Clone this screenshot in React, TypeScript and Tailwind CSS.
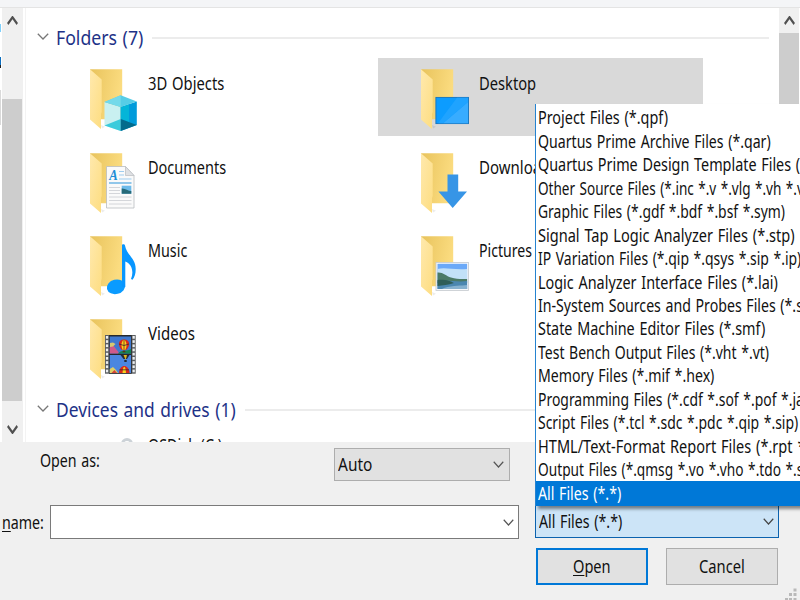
import { useLayoutEffect, useRef, useState } from 'react';
import type { ReactNode } from 'react';

/** Condenses a line of text horizontally so that it fills the given width. */
function Fit({ w, children, className = '' }: { w: number; children: ReactNode; className?: string }) {
  const ref = useRef<HTMLSpanElement>(null);
  const [scale, setScale] = useState(0.87);
  useLayoutEffect(() => {
    if (ref.current) setScale(w / ref.current.offsetWidth);
  }, [w]);
  return (
    <span className={`block shrink-0 whitespace-pre ${className}`} style={{ width: w }}>
      <span ref={ref} className="inline-block origin-left [word-spacing:1.2px]" style={{ transform: `scaleX(${scale})` }}>
        {children}
      </span>
    </span>
  );
}

function Chevron({ className = '', up = false, w = 12, h = 7, stroke = 1.3 }: { className?: string; up?: boolean; w?: number; h?: number; stroke?: number }) {
  return (
    <svg className={`block shrink-0 ${className}`} width={w} height={h} viewBox="0 0 12 7" preserveAspectRatio="none" fill="none" stroke="currentColor" strokeWidth={stroke}>
      <path d={up ? 'M0.8 6.2 6 1 11.2 6.2' : 'M0.8 0.8 6 6 11.2 0.8'} />
    </svg>
  );
}

function Cube() {
  return (
    <g>
      <path d="M16.5 34 32.7 39 32.7 63 16.5 57.5z" fill="#c9f0f1" />
      <path d="M32.7 39 48.8 33.5V57L32.7 63z" fill="#009bdb" />
      <path d="M32.7 39 41 36.2V54L32.7 51z" fill="#04b5d8" />
      <path d="M16.5 34 32.7 27.3 48.8 33.5 32.7 39z" fill="#56cde6" />
      <path d="M16.5 34 32.7 27.3V39z" fill="#74d9ea" />
      <path d="M16.5 57.5 32.7 51V63z" fill="#3bcbdc" />
      <path d="M32.7 51 48.8 57 32.7 63z" fill="#036b8c" />
    </g>
  );
}

function Doc() {
  return (
    <g>
      <path d="M18.5 14.5H37.5L46 23.5V56H18.5z" fill="#fafafa" stroke="#b9bcc0" strokeWidth="0.8" />
      <path d="M37.5 14.5V23.5H46z" fill="#dfe1e4" stroke="#b9bcc0" strokeWidth="0.7" />
      <text x="21.3" y="28.3" fontSize="14.5" fontWeight="700" fontStyle="italic" fill="#1f8fd6" fontFamily="Liberation Serif, serif" textLength="8.5" lengthAdjust="spacingAndGlyphs">A</text>
      <path d="M31 19.5H36M31 23H36M31 27H43.5" stroke="#9fcdef" strokeWidth="1" />
      <path d="M21 31H43.5" stroke="#4ba6df" strokeWidth="1.2" />
      <path d="M21 35.5H32M21 38.5H32M21 41.5H32M21 45H43.5M21 48.5H43.5M21 52H43.5" stroke="#cfd1d6" strokeWidth="0.9" />
      <rect x="33.7" y="33.7" width="9.6" height="8" fill="#6dbbea" />
      <path d="M33.7 36.5C37 36 40 39 43.3 39V41.7H33.7z" fill="#276a78" />
    </g>
  );
}

function Note() {
  return (
    <g>
      <ellipse cx="28" cy="51.8" rx="9.3" ry="7.2" transform="rotate(-14 28 51.8)" fill="#0a9bff" />
      <path d="M34 10C34 9 37 9 37 10.5C38.5 20 47.7 23 47.7 34C47.7 39 46.5 42 44.5 44.8L43 44C46 37 44 29 37.3 26.5V52H34z" fill="#0896ff" />
    </g>
  );
}

function Balloon({ x, y }: { x: number; y: number }) {
  return (
    <g transform={`translate(${x} ${y})`}>
      <path d="M0 -5.5C7 -5.5 6 2 2 5H-2C-6 2 -7 -5.5 0 -5.5z" fill="#d92a1c" />
      <path d="M0 -5.5C-3.4 -3 -3 2 -1.2 5H1.2C3 2 3.4 -3 0 -5.5z" fill="#f7d21e" />
      <path d="M0 -5.5V5" stroke="#7c211c" strokeWidth="0.8" />
      <path d="M-5 -1Q0 2 5 -1" stroke="#3c2830" strokeWidth="0.8" fill="none" />
      <rect x="-1.3" y="5.6" width="2.6" height="1.8" fill="#5b3312" />
    </g>
  );
}

const PERFORATIONS = [0, 1, 2, 3, 4, 5, 6, 7, 8];

function Film() {
  return (
    <g>
      <rect x="17" y="17" width="30.7" height="38.7" fill="#5a5d60" />
      <rect x="21" y="17" width="22.7" height="38.7" fill="#26292c" />
      <rect x="21.7" y="18.5" width="21.3" height="17" fill="#3f78cf" />
      <rect x="21.7" y="37" width="21.3" height="18" fill="#4a86e0" />
      <path d="M21.7 29 25 27 28 31 30.5 34V35.6H21.7z" fill="#cf5a8a" />
      <path d="M22 25 25 24.5 27.5 26 25 28.5 22 29z" fill="#d5c871" />
      <path d="M30 35.6C34 31 39 34 43 31V35.6z" fill="#148552" />
      <Balloon x={36} y={27} />
      <path d="M32.5 37H41.5L39 41H35.5z" fill="#222a37" />
      <path d="M35.5 37H39L37.7 42z" fill="#e0b51f" />
      <rect x="36.3" y="42" width="2.4" height="2" fill="#222a37" />
      <path d="M21.7 51 25 49 28 52 30 55H21.7z" fill="#e0cf65" />
      <path d="M23.5 55 26.5 52 29 55z" fill="#d54436" />
      <path d="M31 55C31.5 45.5 41 45.5 41.5 55z" fill="#d92a1c" />
      <path d="M34.5 55C35 46.5 37.5 46.5 38 55z" fill="#f7d21e" />
      <path d="M31.5 51.8H41" stroke="#3c2830" strokeWidth="0.8" />
      {PERFORATIONS.map((i) => (
        <g key={i} fill="#eceef0">
          <rect x="17.9" y={18 + i * 4.2} width="2.3" height="2.7" />
          <rect x="44.5" y={18 + i * 4.2} width="2.3" height="2.7" />
        </g>
      ))}
    </g>
  );
}

function Screen() {
  return (
    <g>
      <rect x="16.9" y="29.4" width="32.6" height="26.2" fill="#0c9cff" stroke="#1473bd" strokeWidth="0.9" />
      <path d="M49 34V55.2H24z" fill="#38acff" />
      <path d="M38 29.8H49V34L24 55.2H19z" fill="#1fa3ff" />
    </g>
  );
}

function Arrow() {
  return <path d="M28.5 22.5H39.2V39.5H48L33.7 56 19.4 39.5H28.5z" fill="#3795e6" />;
}

function Photo() {
  return (
    <g>
      <rect x="17" y="27.4" width="32.4" height="28" fill="#f7f8fa" stroke="#c3c8ce" strokeWidth="0.8" />
      <rect x="18.5" y="28.8" width="29.6" height="25.2" fill="#6ba9f8" />
      <path d="M18.5 34C26 32 34 35 48.1 34V46H18.5z" fill="#c2e1f8" />
      <path d="M18.5 37.5C24 37 27 41 32 42.5C38 44.5 44 44 48.1 44V48H18.5z" fill="#4b7a66" />
      <path d="M18.5 46.5C28 44.5 38 47.5 48.1 46V54H18.5z" fill="#4b87b0" />
      <path d="M18.5 45C25 44 32 46 35 48C29 50 24 50 18.5 51z" fill="#2f5e58" />
      <path d="M25 53C35 50 42 51 48.1 50V54H23z" fill="#86b1cf" />
    </g>
  );
}

function FolderIcon({ children }: { children: ReactNode }) {
  return (
    <svg className="block shrink-0" width="52" height="64" viewBox="0 0 52 64">
      <defs>
        <linearGradient id="folder-back" x1="0" y1="0" x2="1" y2="0.3">
          <stop offset="0" stopColor="#e8c35c" />
          <stop offset="1" stopColor="#fbdc80" />
        </linearGradient>
        <linearGradient id="folder-front" x1="0" y1="0" x2="1" y2="1">
          <stop offset="0" stopColor="#ffe9ad" />
          <stop offset="1" stopColor="#fddd81" />
        </linearGradient>
      </defs>
      <path d="M13 57 17 58.8 14 60.5z" fill="#000" opacity="0.08" />
      <path d="M2 1.3H34.2V51.2H12z" fill="url(#folder-back)" />
      <path d="M2 1.3 13.7 11.5V44L13 46V61L2 51.5z" fill="url(#folder-front)" />
      {children}
    </svg>
  );
}

const TILES = [
  { name: '3D Objects', w: 76, icon: <Cube /> },
  { name: 'Desktop', w: 57, icon: <Screen />, selected: true },
  { name: 'Documents', w: 78, icon: <Doc /> },
  { name: 'Downloads', w: 79, icon: <Arrow /> },
  { name: 'Music', w: 39, icon: <Note /> },
  { name: 'Pictures', w: 53, icon: <Photo /> },
  { name: 'Videos', w: 47, icon: <Film /> },
];

const FILTERS: [string, number][] = [
  ['Project Files (*.qpf)', 130],
  ['Quartus Prime Archive Files (*.qar)', 233],
  ['Quartus Prime Design Template Files (', 262],
  ['Other Source Files (*.inc *.v *.vlg *.vh *.v', 266],
  ['Graphic Files (*.gdf *.bdf *.bsf *.sym)', 247],
  ['Signal Tap Logic Analyzer Files (*.stp)', 257],
  ['IP Variation Files (*.qip *.qsys *.sip *.ip)', 263],
  ['Logic Analyzer Interface Files (*.lai)', 240],
  ['In-System Sources and Probes Files (*.s', 265],
  ['State Machine Editor Files (*.smf)', 227],
  ['Test Bench Output Files (*.vht *.vt)', 231],
  ['Memory Files (*.mif *.hex)', 176],
  ['Programming Files (*.cdf *.sof *.pof *.ja', 266],
  ['Script Files (*.tcl *.sdc *.pdc *.qip *.sip)', 260],
  ['HTML/Text-Format Report Files (*.rpt *', 267],
  ['Output Files (*.qmsg *.vo *.vho *.tdo *.s', 265],
  ['All Files (*.*)', 83],
];

function GroupHeader({ title, w, className = '' }: { title: string; w: number; className?: string }) {
  return (
    <div className={`flex h-[30px] items-center pl-[11px] pr-[10px] ${className}`}>
      <Chevron className="-mt-[2px] text-[#777]" />
      <Fit w={w} className="ml-[7px] text-[20.5px] leading-[30px] text-[#1e3287]">{title}</Fit>
      <div className="ml-[9px] mt-[1px] h-[2px] flex-1 bg-[#ececec]" />
    </div>
  );
}

export default function App() {
  return (
    <div className="relative flex h-[600px] w-[800px] flex-col overflow-hidden bg-[#f0f0f0] text-[17.3px] leading-[24px] text-[#111] [font-family:'Noto_Sans','Open_Sans',sans-serif]">
      <div className="h-[8px] shrink-0 border-b border-[#e4e4e4] bg-[#f4f5f7]" />
      <div className="flex h-[434px] shrink-0 overflow-hidden bg-white">
        <div className="flex w-[2px] flex-col">
          <div className="mt-[16px] h-[8px] w-[1px] bg-[#7fd0fb]" />
          <div className="mt-[25px] h-[8px] w-[1px] bg-[#0d6fc0]" />
          <div className="h-[3px] w-[1px] bg-[#222]" />
          <div className="mt-[22px] h-[35px] w-[1px] bg-[#d9d9d9]" />
        </div>
        <div className="flex w-[21px] flex-col bg-[#f0f0f0] text-[#505050]">
          <div className="flex h-[91px] justify-center pt-[8px] pr-[1px]">
            <Chevron up w={11} h={9} stroke={2.1} />
          </div>
          <div className="h-[302px] w-[20px] bg-[#cdcdcd]" />
          <div className="flex justify-center pt-[24px] pr-[1px]">
            <Chevron w={11} h={9} stroke={2.1} />
          </div>
        </div>
        <div className="ml-[2px] flex w-[754px] flex-col border-l border-[#f3f3f3]">
          <GroupHeader title="Folders (7)" w={87} className="mt-[14px]" />
          <div className="mt-[6.3px] grid grid-cols-[325px_325px] gap-x-[6px] gap-y-[5.3px] pl-[21px]">
            {TILES.map((t) => (
              <div key={t.name} className={`flex h-[78px] pl-[41px] pt-[10px] ${t.selected ? 'bg-[#d9d9d9]' : ''}`}>
                <FolderIcon>{t.icon}</FolderIcon>
                <Fit w={t.w} className="ml-[8px] mt-[4px]">{t.name}</Fit>
              </div>
            ))}
          </div>
          <GroupHeader title="Devices and drives (1)" w={180} className="mt-[8px] shrink-0" />
          <div className="flex shrink-0 pl-[95px] pt-[14px]">
            <div className="h-[12px] w-[12px] rounded-full border-[3px] border-[#ccd2d7]" />
            <Fit w={74} className="ml-[15px] -mt-[4px]">OSDisk (C:)</Fit>
          </div>
        </div>
        <div className="flex w-[20px] flex-col bg-[#f0f0f0] text-[#505050]">
          <div className="flex h-[25px] justify-center pt-[8px]">
            <Chevron up w={11} h={9} stroke={2.1} />
          </div>
          <div className="h-[200px] bg-[#cdcdcd]" />
        </div>
      </div>

      <div className="flex h-[44px] shrink-0 pl-[40px] pt-[6px]">
        <Fit w={60} className="mt-[1px]">Open as:</Fit>
        <div className="ml-[234px] flex h-[33px] w-[176px] items-center justify-between border border-[#adadad] bg-[#e1e1e1] pl-[3px] pr-[5px]">
          <Fit w={34} className="mt-[1px]">Auto</Fit>
          <Chevron w={11} h={7} className="text-[#555]" />
        </div>
      </div>

      <div className="mt-[19px] flex h-[34px] shrink-0 items-start pl-[2px]">
        <Fit w={42} className="mt-[6px]"><span className="underline decoration-1 underline-offset-2">n</span>ame:</Fit>
        <div className="ml-[6px] flex h-[34px] w-[469px] items-center justify-end border border-[#7a7a7a] bg-white pr-[4px]">
          <Chevron w={11} h={7} className="text-[#555]" />
        </div>
        <div className="ml-[16px] flex h-[33px] w-[244px] items-center justify-between border border-[#0b62ae] bg-[#cce4f7] pl-[3px] pr-[4px]">
          <Fit w={83} className="mt-[1px]">All Files (*.*)</Fit>
          <Chevron w={11} h={7} className="text-[#444]" />
        </div>
      </div>

      <div className="mt-[9px] flex shrink-0 pl-[536px]">
        <div className="flex h-[37px] w-[112px] items-center justify-center border-2 border-[#0078d7] bg-[#e1e1e1]">
          <Fit w={38} className="mt-[1px]"><span className="underline decoration-1 underline-offset-2">O</span>pen</Fit>
        </div>
        <div className="ml-[18px] flex h-[37px] w-[112px] items-center justify-center border border-[#adadad] bg-[#e1e1e1]">
          <Fit w={46} className="mt-[1px]">Cancel</Fit>
        </div>
      </div>

      <svg className="absolute bottom-0 right-0" width="16" height="14" fill="#b9b9b9">
        <path d="M9.5 2.5h3v3h-3zM5 7h3v3h-3zM9.5 7h3v3h-3zM1 12h3v2h-3zM5 12h3v2h-3zM9.5 12h3v2h-3z" />
      </svg>

      <div className="absolute left-[535px] top-[104px] flex h-[401.5px] w-[265px] flex-col overflow-hidden border-l border-[#2583d0] bg-white pt-[2px] shadow-[3px_3px_3px_rgba(0,0,0,0.45)]">
        {FILTERS.map(([label, w], i) => (
          <div key={label} className={`flex h-[23.47px] shrink-0 items-center pl-[2px] ${i === FILTERS.length - 1 ? '-mt-[1px] h-[25.5px] bg-[#0078d7] text-white' : ''}`}>
            <Fit w={w} className="mt-[1px]">{label}</Fit>
          </div>
        ))}
      </div>
    </div>
  );
}
